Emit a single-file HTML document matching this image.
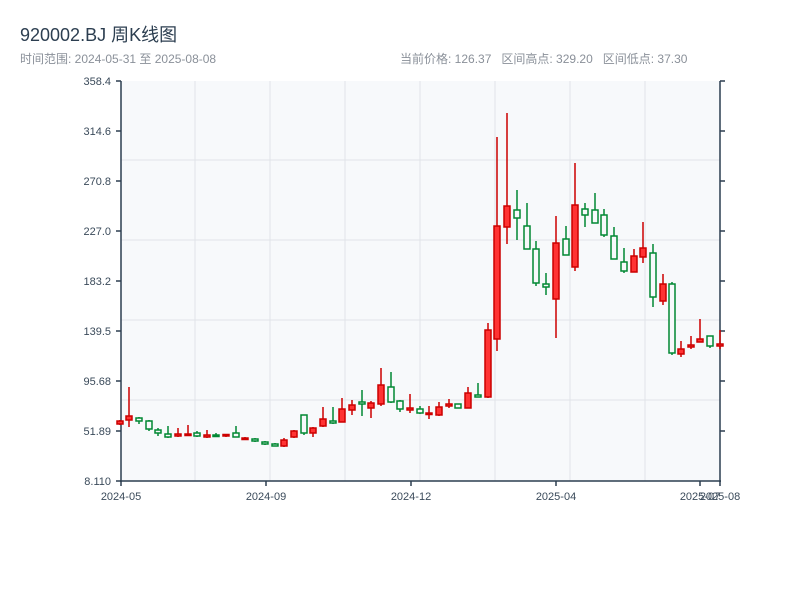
<!DOCTYPE html>
<html><head><meta charset="utf-8"><style>
body{margin:0;width:800px;height:600px;background:#fff;overflow:hidden;font-family:"Liberation Sans","Noto Sans CJK SC",sans-serif}
</style></head><body>
<svg width="800" height="600" xmlns="http://www.w3.org/2000/svg" font-family="Liberation Sans, Noto Sans CJK SC, sans-serif">
<text x="20" y="41" font-size="18" fill="#2c3e50">920002.BJ 周K线图</text>
<text x="20" y="63" font-size="12" fill="#8a9099">时间范围: 2024-05-31 至 2025-08-08</text>
<text x="400" y="63" font-size="12" fill="#8a9099" xml:space="preserve">当前价格: 126.37   区间高点: 329.20   区间低点: 37.30</text>
<rect x="121" y="81" width="599" height="400" fill="#f7f9fb"/>
<g stroke="#e1e4e8" stroke-width="1">
<line x1="121" x2="720" y1="160" y2="160"/><line x1="121" x2="720" y1="240" y2="240"/><line x1="121" x2="720" y1="320" y2="320"/><line x1="121" x2="720" y1="400" y2="400"/>
<line x1="195" x2="195" y1="81" y2="481"/><line x1="270" x2="270" y1="81" y2="481"/><line x1="345" x2="345" y1="81" y2="481"/><line x1="420" x2="420" y1="81" y2="481"/><line x1="495" x2="495" y1="81" y2="481"/><line x1="570" x2="570" y1="81" y2="481"/><line x1="645" x2="645" y1="81" y2="481"/>
</g>
<g stroke="#2c3e50" stroke-width="1.5">
<line x1="121" x2="121" y1="81" y2="482"/><line x1="720" x2="720" y1="81" y2="482"/><line x1="120" x2="721" y1="481" y2="481"/>
<line x1="116" x2="121" y1="81" y2="81"/><line x1="116" x2="121" y1="131" y2="131"/><line x1="116" x2="121" y1="181" y2="181"/><line x1="116" x2="121" y1="231" y2="231"/><line x1="116" x2="121" y1="281" y2="281"/><line x1="116" x2="121" y1="331" y2="331"/><line x1="116" x2="121" y1="381" y2="381"/><line x1="116" x2="121" y1="431" y2="431"/><line x1="116" x2="121" y1="481" y2="481"/>
<line x1="720" x2="725" y1="81" y2="81"/><line x1="720" x2="725" y1="131" y2="131"/><line x1="720" x2="725" y1="181" y2="181"/><line x1="720" x2="725" y1="231" y2="231"/><line x1="720" x2="725" y1="281" y2="281"/><line x1="720" x2="725" y1="331" y2="331"/><line x1="720" x2="725" y1="381" y2="381"/><line x1="720" x2="725" y1="431" y2="431"/>
<line x1="121" x2="121" y1="481" y2="486"/><line x1="266" x2="266" y1="481" y2="486"/><line x1="411" x2="411" y1="481" y2="486"/><line x1="556" x2="556" y1="481" y2="486"/><line x1="700" x2="700" y1="481" y2="486"/><line x1="720" x2="720" y1="481" y2="486"/>
</g>
<g font-size="11" fill="#3a4a5a" text-anchor="end">
<text x="111" y="85">358.4</text><text x="111" y="135">314.6</text><text x="111" y="185">270.8</text><text x="111" y="235">227.0</text><text x="111" y="285">183.2</text><text x="111" y="335">139.5</text><text x="111" y="385">95.68</text><text x="111" y="435">51.89</text><text x="111" y="485">8.110</text>
</g>
<g font-size="11" fill="#3a4a5a" text-anchor="middle">
<text x="121" y="500">2024-05</text><text x="266" y="500">2024-09</text><text x="411" y="500">2024-12</text><text x="556" y="500">2025-04</text><text x="700" y="500">2025-07</text><text x="720" y="500">2025-08</text>
</g>
<g stroke-width="1.5">
<!-- red: fill #ff3333 stroke #cc0000 ; green hollow -->
<g stroke="#cc0000" fill="#ff3333">
<line x1="120" x2="120" y1="420" y2="425"/><rect x="117" y="421" width="6" height="3"/>
<line x1="129" x2="129" y1="387" y2="427"/><rect x="126" y="416" width="6" height="4"/>
<line x1="178" x2="178" y1="428" y2="437"/><rect x="175" y="434" width="6" height="2"/>
<line x1="188" x2="188" y1="425" y2="436"/><rect x="185" y="434" width="6" height="1.5"/>
<line x1="207" x2="207" y1="430" y2="438"/><rect x="204" y="435" width="6" height="2"/>
<line x1="226" x2="226" y1="434" y2="437"/><rect x="223" y="434.5" width="6" height="1.5"/>
<line x1="245" x2="245" y1="437" y2="440"/><rect x="242" y="438" width="6" height="1.5"/>
<line x1="284" x2="284" y1="438" y2="447"/><rect x="281" y="440" width="6" height="6"/>
<line x1="294" x2="294" y1="430" y2="438"/><rect x="291" y="431" width="6" height="6"/>
<line x1="313" x2="313" y1="427" y2="437"/><rect x="310" y="428" width="6" height="5"/>
<line x1="323" x2="323" y1="407" y2="427"/><rect x="320" y="419" width="6" height="7"/>
<line x1="342" x2="342" y1="398" y2="422"/><rect x="339" y="409" width="6" height="13"/>
<line x1="352" x2="352" y1="400" y2="415"/><rect x="349" y="405" width="6" height="5"/>
<line x1="371" x2="371" y1="401" y2="418"/><rect x="368" y="403" width="6" height="5"/>
<line x1="381" x2="381" y1="368" y2="406"/><rect x="378" y="385" width="6" height="19"/>
<line x1="410" x2="410" y1="394" y2="413"/><rect x="407" y="408" width="6" height="2"/>
<line x1="429" x2="429" y1="406" y2="419"/><rect x="426" y="413" width="6" height="1.5"/>
<line x1="439" x2="439" y1="402" y2="416"/><rect x="436" y="407" width="6" height="8"/>
<line x1="449" x2="449" y1="399" y2="408"/><rect x="446" y="404" width="6" height="2"/>
<line x1="468" x2="468" y1="387" y2="408"/><rect x="465" y="393" width="6" height="15"/>
<line x1="488" x2="488" y1="323" y2="398"/><rect x="485" y="330" width="6" height="67"/>
<line x1="497" x2="497" y1="137" y2="351"/><rect x="494" y="226" width="6" height="113"/>
<line x1="507" x2="507" y1="113" y2="244"/><rect x="504" y="206" width="6" height="21"/>
<line x1="556" x2="556" y1="216" y2="338"/><rect x="553" y="243" width="6" height="56"/>
<line x1="575" x2="575" y1="163" y2="271"/><rect x="572" y="205" width="6" height="62"/>
<line x1="634" x2="634" y1="249" y2="272"/><rect x="631" y="256" width="6" height="16"/>
<line x1="643" x2="643" y1="222" y2="263"/><rect x="640" y="248" width="6" height="9"/>
<line x1="663" x2="663" y1="274" y2="305"/><rect x="660" y="284" width="6" height="17"/>
<line x1="681" x2="681" y1="341" y2="357"/><rect x="678" y="349" width="6" height="5"/>
<line x1="691" x2="691" y1="336" y2="349"/><rect x="688" y="345" width="6" height="2"/>
<line x1="700" x2="700" y1="319" y2="342"/><rect x="697" y="339" width="6" height="3"/>
<line x1="720" x2="720" y1="330" y2="349"/><rect x="717" y="344" width="6" height="2"/>
</g>
<g stroke="#008833" fill="#f7f9fb">
<line x1="139" x2="139" y1="417" y2="424"/><rect x="136" y="418" width="6" height="3"/>
<line x1="149" x2="149" y1="420" y2="431"/><rect x="146" y="421" width="6" height="8"/>
<line x1="158" x2="158" y1="428" y2="436"/><rect x="155" y="430" width="6" height="3"/>
<line x1="168" x2="168" y1="426" y2="438"/><rect x="165" y="434" width="6" height="3"/>
<line x1="197" x2="197" y1="431" y2="437"/><rect x="194" y="433" width="6" height="3"/>
<line x1="216" x2="216" y1="433" y2="437"/><rect x="213" y="435" width="6" height="1.5"/>
<line x1="236" x2="236" y1="426" y2="437"/><rect x="233" y="433" width="6" height="4"/>
<line x1="255" x2="255" y1="438" y2="442"/><rect x="252" y="439" width="6" height="2"/>
<line x1="265" x2="265" y1="441" y2="445"/><rect x="262" y="442" width="6" height="2"/>
<line x1="275" x2="275" y1="443" y2="446"/><rect x="272" y="444" width="6" height="2"/>
<line x1="304" x2="304" y1="415" y2="435"/><rect x="301" y="415" width="6" height="18"/>
<line x1="333" x2="333" y1="407" y2="424"/><rect x="330" y="421" width="6" height="2"/>
<line x1="362" x2="362" y1="390" y2="416"/><rect x="359" y="402" width="6" height="2"/>
<line x1="391" x2="391" y1="372" y2="403"/><rect x="388" y="387" width="6" height="15"/>
<line x1="400" x2="400" y1="400" y2="412"/><rect x="397" y="401" width="6" height="8"/>
<line x1="420" x2="420" y1="406" y2="414"/><rect x="417" y="409" width="6" height="4"/>
<rect x="455" y="404" width="6" height="4"/>
<line x1="478" x2="478" y1="383" y2="397"/><rect x="475" y="395" width="6" height="2"/>
<line x1="517" x2="517" y1="190" y2="240"/><rect x="514" y="210" width="6" height="8"/>
<line x1="527" x2="527" y1="203" y2="249"/><rect x="524" y="226" width="6" height="23"/>
<line x1="536" x2="536" y1="241" y2="286"/><rect x="533" y="249" width="6" height="34"/>
<line x1="546" x2="546" y1="273" y2="295"/><rect x="543" y="284" width="6" height="3"/>
<line x1="566" x2="566" y1="226" y2="255"/><rect x="563" y="239" width="6" height="16"/>
<line x1="585" x2="585" y1="203" y2="227"/><rect x="582" y="209" width="6" height="6"/>
<line x1="595" x2="595" y1="193" y2="223"/><rect x="592" y="210" width="6" height="13"/>
<line x1="604" x2="604" y1="209" y2="237"/><rect x="601" y="215" width="6" height="20"/>
<line x1="614" x2="614" y1="227" y2="259"/><rect x="611" y="236" width="6" height="23"/>
<line x1="624" x2="624" y1="248" y2="273"/><rect x="621" y="262" width="6" height="9"/>
<line x1="653" x2="653" y1="244" y2="307"/><rect x="650" y="253" width="6" height="44"/>
<line x1="672" x2="672" y1="282" y2="355"/><rect x="669" y="284" width="6" height="69"/>
<line x1="710" x2="710" y1="336" y2="348"/><rect x="707" y="336" width="6" height="10"/>
</g>
</g>
</svg>
</body></html>
